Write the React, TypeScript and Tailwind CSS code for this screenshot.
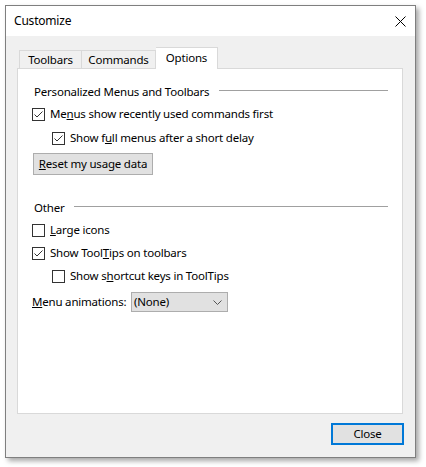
import React from "react";

const font = { fontFamily: '"Noto Sans", "Open Sans", Arial, sans-serif' };

function CheckBox({ checked }: { checked: boolean }) {
    return (
        <span className="w-[13px] h-[13px] border border-[#333333] bg-white flex items-center justify-center shrink-0">
            {checked && (
                <svg width="11" height="11" viewBox="0 0 11 11" fill="none">
                    <path d="M1.5 5.5 L4 8 L9.5 2.5" stroke="#333333" strokeWidth="1" />
                </svg>
            )}
        </span>
    );
}

function CheckRow({
    checked,
    indent,
    className,
    children,
}: {
    checked: boolean;
    indent?: boolean;
    className?: string;
    children: React.ReactNode;
}) {
    return (
        <div className={`flex items-center h-[16px] gap-[5px] ${indent ? "ml-[34px]" : "ml-[14px]"} ${className ?? ""}`}>
            <CheckBox checked={checked} />
            <span className="leading-[16px] whitespace-nowrap">{children}</span>
        </div>
    );
}

function GroupHeader({ title, className }: { title: string; className?: string }) {
    return (
        <div className={`flex items-center h-[16px] ml-[16px] mr-[14px] gap-[10px] ${className ?? ""}`}>
            <span className="leading-[16px] whitespace-nowrap">{title}</span>
            <span className="flex-1 h-px bg-[#a0a0a0] -mt-[3px]" />
        </div>
    );
}

export default function App() {
    return (
        <div
            className="w-[426px] h-[467px] bg-white pt-[5px] pl-[5px] text-[11.5px] tracking-[-0.2px] text-black"
            style={font}
        >
            <div className="w-[411px] h-[453px] border border-[#7f7f7f] bg-[#f0f0f0] shadow-[3px_3px_5px_rgba(0,0,0,0.35)] flex flex-col">
                <div className="h-[30px] bg-white flex items-center justify-between pl-[8px] pr-[9px]">
                    <span className="leading-none text-[12px]">Customize</span>
                    <svg width="11" height="11" viewBox="0 0 11 11" fill="none">
                        <path d="M0.5 0.5 L10.5 10.5 M10.5 0.5 L0.5 10.5" stroke="#000" strokeWidth="1" />
                    </svg>
                </div>

                <div className="flex-1 pt-[11px] pl-[11px] pr-[12px] flex flex-col">
                    <div className="flex items-end h-[21px] pl-[2px] relative z-10">
                        <div className="h-[18px] w-[63px] border border-[#d9d9d9] border-b-0 bg-[#f0f0f0] flex items-center justify-center pt-px">
                            Toolbars
                        </div>
                        <div className="h-[18px] w-[74px] border border-l-0 border-[#d9d9d9] border-b-0 bg-[#f0f0f0] flex items-center justify-center pt-px">
                            Commands
                        </div>
                        <div className="h-[22px] w-[62px] -mb-px border border-l-0 border-[#d9d9d9] border-b-0 bg-white flex items-center justify-center pb-[2px]">
                            Options
                        </div>
                    </div>
                    <div className="h-[346px] border border-[#d9d9d9] bg-white flex flex-col pt-[15px]">
                        <GroupHeader title="Personalized Menus and Toolbars" />
                        <CheckRow checked className="mt-[6px]">
                            Me<u>n</u>us show recently used commands first
                        </CheckRow>
                        <CheckRow checked indent className="mt-[8px]">
                            Show f<u>u</u>ll menus after a short delay
                        </CheckRow>
                        <div className="mt-[7px] ml-[15px] w-[120px] h-[22px] border border-[#adadad] bg-[#e1e1e1] flex items-center justify-center">
                            <span className="whitespace-nowrap">
                                <u>R</u>eset my usage data
                            </span>
                        </div>

                        <GroupHeader title="Other" className="mt-[25px]" />
                        <CheckRow checked={false} className="mt-[6px]">
                            <u>L</u>arge icons
                        </CheckRow>
                        <CheckRow checked className="mt-[7px]">
                            Show Tool<u>T</u>ips on toolbars
                        </CheckRow>
                        <CheckRow checked={false} indent className="mt-[7px]">
                            Show s<u>h</u>ortcut keys in ToolTips
                        </CheckRow>
                        <div className="mt-[8px] ml-[14px] flex items-center h-[20px]">
                            <span className="w-[99px] whitespace-nowrap">
                                <u>M</u>enu animations:
                            </span>
                            <div className="w-[97px] h-[20px] border border-[#adadad] bg-[#e1e1e1] flex items-center justify-between pl-[2px] pr-[5px]">
                                <span>(None)</span>
                                <svg width="9" height="5" viewBox="0 0 9 5" fill="none">
                                    <path d="M0.5 0.5 L4.5 4.5 L8.5 0.5" stroke="#555" strokeWidth="1" />
                                </svg>
                            </div>
                        </div>
                    </div>
                    <div className="flex justify-end mt-[9px] -mr-[1px]">
                        <div className="w-[73px] h-[22px] border-2 border-[#0078d7] bg-[#e1e1e1] flex items-center justify-center">
                            Close
                        </div>
                    </div>
                </div>
            </div>
        </div>
    );
}
